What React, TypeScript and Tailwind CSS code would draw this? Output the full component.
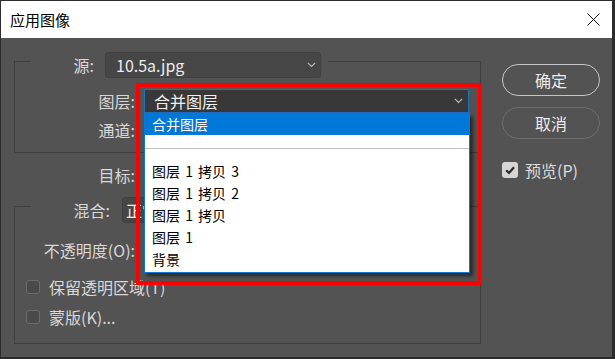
import React from "react";

const Chevron = ({ color = "#bdbdbd" }: { color?: string }) => (
  <svg width="9" height="6" viewBox="0 0 9 6" className="shrink-0">
    <path d="M0.8 0.8 L4.5 4.5 L8.2 0.8" fill="none" stroke={color} strokeWidth="1.1" />
  </svg>
);

const EmptyBox = () => (
  <div className="w-[14px] h-[14px] rounded-[3px] border border-[#6c6c6c] bg-[#4a4a4a] shrink-0" />
);

export default function App() {
  return (
    <div className="relative w-[615px] h-[359px] bg-[#2c2c2c] pl-[1px] pt-[1px] pr-[3px] pb-[2px] flex flex-col font-['Noto_Sans_CJK_SC',sans-serif] overflow-hidden">
      {/* Title bar */}
      <div className="h-[37px] bg-white flex items-center justify-between pl-[9px] pr-[12px] shrink-0">
        <span className="text-[15px] leading-[20px] text-black">应用图像</span>
        <svg width="13" height="13" viewBox="0 0 13 13">
          <path d="M0.5 0.5 L12.5 12.5 M12.5 0.5 L0.5 12.5" stroke="#111" strokeWidth="1" />
        </svg>
      </div>

      {/* Body */}
      <div className="flex-1 bg-[#535353] flex text-[#d8d8d8] text-[16px]">
        {/* Left column */}
        <div className="w-[480px] pl-[13px] flex flex-col shrink-0">
          {/* Group 1 */}
          <div className="mt-[23px] h-[92px] w-[467px] border border-[#3f3f3f] flex flex-col">
            <div className="-mt-[10px] ml-[16px] self-start flex items-center bg-[#535353] pr-[7px] h-[26px]">
              <span className="w-[63px] text-right leading-[20px]">源:</span>
              <div className="ml-[11px] w-[216px] h-[26px] rounded-[3px] bg-[#464646] border border-[#404040] flex items-center justify-between pl-[10px] pr-[4px]">
                <span className="text-[#ececec] leading-[20px]">10.5a.jpg</span>
                <Chevron />
              </div>
            </div>
            <div className="mt-[11px] h-[24px] flex items-center">
              <span className="w-[120px] text-right leading-[20px]">图层:</span>
              <div className="ml-[9px] w-[325px] h-[24px] bg-[#383838] border border-[#1f6fc4] flex items-center justify-between pl-[9px] pr-[5px]">
                <span className="text-[#f0f0f0] leading-[20px]">合并图层</span>
                <Chevron />
              </div>
            </div>
            <div className="mt-[5px] h-[24px] flex items-center">
              <span className="w-[120px] text-right leading-[20px]">通道:</span>
            </div>
          </div>

          {/* 目标 */}
          <div className="mt-[10px] h-[24px] flex items-center">
            <span className="w-[121px] text-right leading-[20px]">目标:</span>
          </div>

          {/* Group 2 */}
          <div className="mt-[19px] h-[138px] w-[467px] border border-[#3f3f3f] flex flex-col">
            <div className="-mt-[10px] ml-[16px] self-start flex items-center bg-[#535353] h-[26px]">
              <span className="w-[79px] text-right leading-[20px]">混合:</span>
              <div className="ml-[12px] w-[200px] h-[26px] rounded-[3px] bg-[#464646] border border-[#404040] flex items-center pl-[3px]">
                <span className="text-[#ececec] leading-[20px]">正常</span>
              </div>
            </div>
            <div className="mt-[15px] h-[24px] flex items-center">
              <span className="w-[120px] text-right leading-[20px]">不透明度(O):</span>
            </div>
            <div className="mt-[15px] h-[20px] flex items-center pl-[11px]">
              <EmptyBox />
              <span className="ml-[9px] leading-[20px]">保留透明区域(T)</span>
            </div>
            <div className="mt-[10px] h-[20px] flex items-center pl-[11px]">
              <EmptyBox />
              <span className="ml-[9px] leading-[20px]">蒙版(K)...</span>
            </div>
          </div>
        </div>

        {/* Right column */}
        <div className="ml-[21px] w-[98px] flex flex-col">
          <div className="mt-[26px] h-[32px] rounded-full border-[1.5px] border-[#c4c4c4] flex items-center justify-center text-[#ececec] leading-[20px]">
            确定
          </div>
          <div className="mt-[11px] h-[32px] rounded-full border-[1.5px] border-[#6e6e6e] flex items-center justify-center text-[#ececec] leading-[20px]">
            取消
          </div>
          <div className="mt-[23px] h-[16px] flex items-center">
            <div className="w-[16px] h-[16px] rounded-[3px] bg-[#d6d6d6] flex items-center justify-center shrink-0">
              <svg width="12" height="12" viewBox="0 0 12 12">
                <path d="M2.2 6.3 L5 9 L10 3.2" fill="none" stroke="#2a2a2a" strokeWidth="2.2" />
              </svg>
            </div>
            <span className="ml-[7px] leading-[20px] text-[#dcdcdc]">预览(P)</span>
          </div>
        </div>
      </div>

      {/* Dropdown list overlay */}
      <div className="absolute left-[144px] top-[113px] w-[326px] h-[160px] bg-white border-x border-b border-[#0a78d4] shadow-[3px_3px_4px_rgba(0,0,0,0.55)] flex flex-col text-[14px] text-black [word-spacing:2px]">
        <div className="h-[22px] bg-[#0078d7] text-white flex items-center pl-[7px] leading-[18px]">合并图层</div>
        <div className="h-[13px]" />
        <div className="h-[1px] bg-[#c0c0c0]" />
        <div className="h-[11px]" />
        <div className="h-[22px] flex items-center pl-[7px] leading-[18px] whitespace-pre">图层 1 拷贝 3</div>
        <div className="h-[22px] flex items-center pl-[7px] leading-[18px] whitespace-pre">图层 1 拷贝 2</div>
        <div className="h-[22px] flex items-center pl-[7px] leading-[18px] whitespace-pre">图层 1 拷贝</div>
        <div className="h-[22px] flex items-center pl-[7px] leading-[18px] whitespace-pre">图层 1</div>
        <div className="h-[22px] flex items-center pl-[7px] leading-[18px]">背景</div>
      </div>

      {/* Red annotation box */}
      <div className="absolute left-[136px] top-[83px] w-[346px] h-[202px] border-4 border-[#ff0000] pointer-events-none" />
    </div>
  );
}
